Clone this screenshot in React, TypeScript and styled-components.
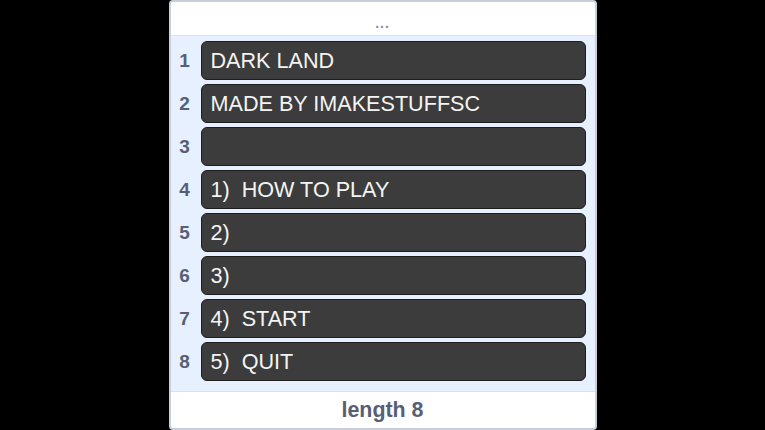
import styled, { createGlobalStyle } from 'styled-components';

const GlobalStyle = createGlobalStyle`
  html, body {
    margin: 0;
    padding: 0;
    background: #000;
    font-family: 'Liberation Sans', Arial, sans-serif;
  }
`;

const Stage = styled.div`
  display: flex;
  justify-content: center;
  width: 765px;
  height: 430px;
  overflow: hidden;
`;

const Monitor = styled.div`
  width: 428px;
  height: 430px;
  box-sizing: border-box;
  display: flex;
  flex-direction: column;
  background: #e6f0ff;
  border: 2px solid #c9cfda;
  border-radius: 4px;
  overflow: hidden;
`;

const Header = styled.div`
  height: 34px;
  flex: none;
  background: #fff;
  border-bottom: 1px solid #d9e1ee;
  display: flex;
  align-items: center;
  justify-content: center;
  color: #8a90a0;
  font-size: 14px;
  font-weight: bold;
  letter-spacing: 1px;
  padding-top: 8px;
  box-sizing: border-box;
`;

const List = styled.div`
  flex: 1;
  display: flex;
  flex-direction: column;
  gap: 4px;
  padding: 5px 9px 0 0;
`;

const Row = styled.div`
  display: flex;
  align-items: center;
  height: 39px;
`;

const Index = styled.div`
  width: 30px;
  padding-right: 2px;
  box-sizing: border-box;
  text-align: center;
  color: #575e75;
  font-size: 19px;
  font-weight: bold;
`;

const Item = styled.div`
  flex: 1;
  height: 39px;
  box-sizing: border-box;
  display: flex;
  align-items: center;
  padding-left: 9px;
  background: #3c3c3c;
  border: 1px solid #1e1e1e;
  border-radius: 6px;
  color: #f4f4f4;
  font-size: 21.6px;
  white-space: pre;
`;

const Footer = styled.div`
  height: 36px;
  flex: none;
  background: #fff;
  border-top: 1px solid #d9e1ee;
  display: flex;
  align-items: center;
  justify-content: center;
  color: #575e75;
  font-size: 21.4px;
  font-weight: bold;
`;

const items = [
  'DARK LAND',
  'MADE BY IMAKESTUFFSC',
  '',
  '1)  HOW TO PLAY',
  '2)',
  '3)',
  '4)  START',
  '5)  QUIT',
];

export default function App() {
  return (
    <>
      <GlobalStyle />
      <Stage>
        <Monitor>
          <Header>...</Header>
          <List>
            {items.map((text, i) => (
              <Row key={i}>
                <Index>{i + 1}</Index>
                <Item>{text}</Item>
              </Row>
            ))}
          </List>
          <Footer>length {items.length}</Footer>
        </Monitor>
      </Stage>
    </>
  );
}
